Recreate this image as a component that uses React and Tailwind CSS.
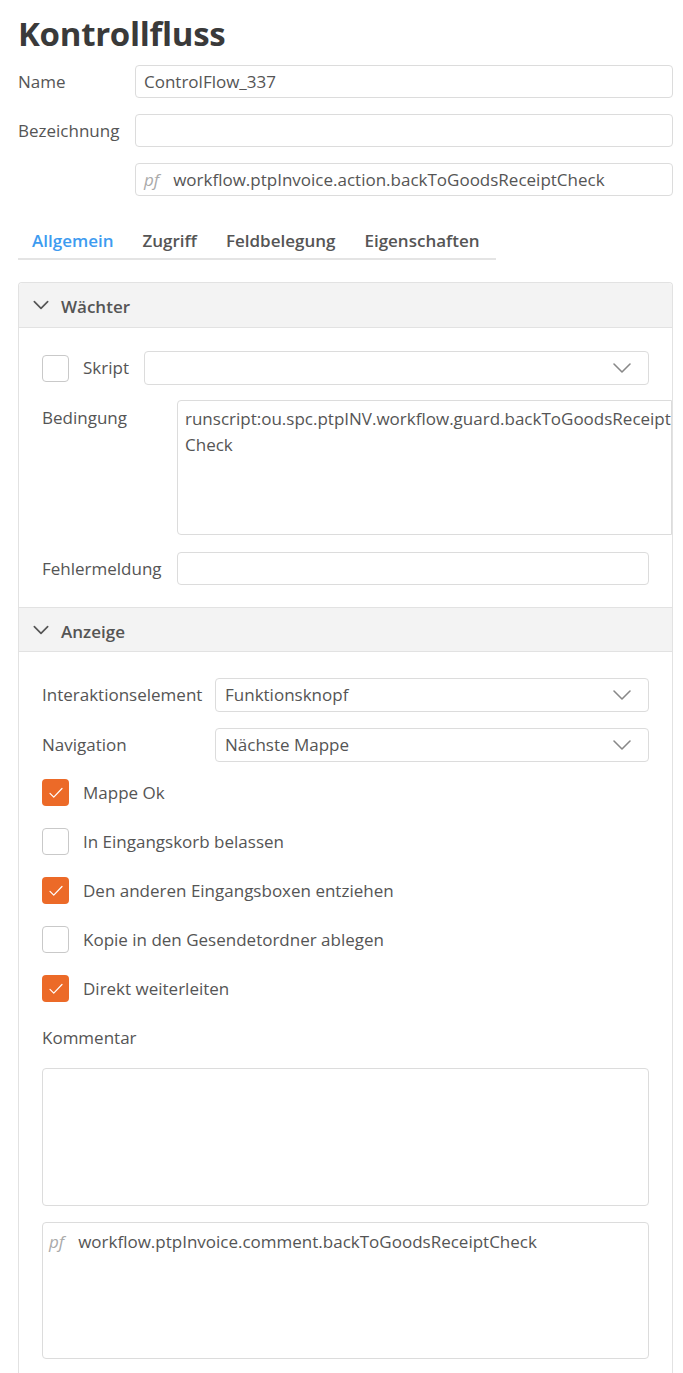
import React from 'react';

const Chevron = ({ className = '', w = '1.6' }) => (
  <svg viewBox="0 0 24 24" className={className} fill="none" stroke="currentColor" strokeWidth={w} strokeLinecap="round" strokeLinejoin="round">
    <path d="M4 8l8 8 8-8" />
  </svg>
);

const Check = () => (
  <svg viewBox="0 0 24 24" className="w-[18px] h-[18px]" fill="none" stroke="white" strokeWidth="1.6" strokeLinecap="round" strokeLinejoin="round">
    <path d="M4 12.5l5 5L20 6" />
  </svg>
);

const Box = ({ checked }) =>
  checked ? (
    <span className="w-[27px] h-[27px] rounded-[4px] bg-[#ec6a28] flex items-center justify-center shrink-0">
      <Check />
    </span>
  ) : (
    <span className="w-[27px] h-[27px] rounded-[4px] border border-[#c9c9c9] bg-white shrink-0" />
  );

const Input = ({ children, className = '' }) => (
  <div className={`h-[33px] border border-[#dcdcdc] rounded-[4px] bg-white flex items-center px-[8px] text-[17px] leading-[22px] text-[#555] ${className}`}>
    {children}
  </div>
);

const Select = ({ value, className = '' }) => (
  <div className={`h-[34px] border border-[#dcdcdc] rounded-[4px] bg-white flex items-center justify-between pl-[9px] pr-[14px] text-[17px] leading-[22px] text-[#555] ${className}`}>
    <span>{value}</span>
    <Chevron className="w-[24px] h-[24px] text-[#888]" />
  </div>
);

const PanelHeader = ({ title, top }) => (
  <div className={`h-[45px] bg-[#f3f3f3] border-b border-[#e2e2e2] flex items-center pl-[12px] gap-[10px] ${top ? 'rounded-t-[4px]' : 'border-t'}`}>
    <Chevron className="w-[20px] h-[20px] text-[#555]" w="2" />
    <span className="text-[17px] leading-[22px] font-semibold text-[#555] pt-[4px]">{title}</span>
  </div>
);

const checks = [
  ['Mappe Ok', true],
  ['In Eingangskorb belassen', false],
  ['Den anderen Eingangsboxen entziehen', true],
  ['Kopie in den Gesendetordner ablegen', false],
  ['Direkt weiterleiten', true],
];

export default function App() {
  return (
    <div className="w-[683px] min-h-[1373px] bg-white font-['Open_Sans',sans-serif] text-[#555] text-[17px] leading-[22px] pl-[18px] pr-[10px]">
      <h1 className="text-[33px] font-bold text-[#3a3a3a] pt-[10px] leading-[48px] tracking-[-0.3px]">Kontrollfluss</h1>

      <div className="mt-[7px] flex flex-col gap-[16px]">
        <div className="flex items-center">
          <span className="w-[117px]">Name</span>
          <Input className="flex-1">ControlFlow_337</Input>
        </div>
        <div className="flex items-center">
          <span className="w-[117px]">Bezeichnung</span>
          <Input className="flex-1" />
        </div>
        <div className="flex items-center">
          <span className="w-[117px]" />
          <Input className="flex-1">
            <span className="italic text-[#aaa] mr-[14px]">pf</span>
            workflow.ptpInvoice.action.backToGoodsReceiptCheck
          </Input>
        </div>
      </div>

      <div className="mt-[34px] w-[478px] border-b-2 border-[#e4e4e4] flex gap-[29px] pl-[14px] pb-[6px] font-semibold">
        <span className="text-[#3d9bf0]">Allgemein</span>
        <span>Zugriff</span>
        <span>Feldbelegung</span>
        <span>Eigenschaften</span>
      </div>

      <div className="mt-[22px] border border-[#e2e2e2] border-b-0 rounded-t-[4px]">
        <PanelHeader title="Wächter" top />
        <div className="pl-[23px] pt-[23px] pb-[22px]">
          <div className="flex items-center pr-[23px]">
            <Box checked={false} />
            <span className="ml-[14px] w-[61px]">Skript</span>
            <Select className="flex-1" value="" />
          </div>
          <div className="flex mt-[15px]">
            <span className="w-[135px] pt-[7px]">Bedingung</span>
            <div className="flex-1 h-[135px] border border-[#dcdcdc] rounded-l-[4px] px-[7px] pt-[5px] leading-[26px] whitespace-nowrap overflow-hidden">
              runscript:ou.spc.ptpINV.workflow.guard.backToGoodsReceipt
              <br />
              Check
            </div>
          </div>
          <div className="flex items-center mt-[17px] pr-[23px]">
            <span className="w-[135px]">Fehlermeldung</span>
            <Input className="flex-1" />
          </div>
        </div>

        <PanelHeader title="Anzeige" />
        <div className="pl-[23px] pr-[23px] pt-[26px]">
          <div className="flex items-center">
            <span className="w-[173px]">Interaktionselement</span>
            <Select className="flex-1" value="Funktionsknopf" />
          </div>
          <div className="flex items-center mt-[16px]">
            <span className="w-[173px]">Navigation</span>
            <Select className="flex-1" value="Nächste Mappe" />
          </div>

          <div className="mt-[17px] flex flex-col gap-[22px]">
            {checks.map(([label, on]) => (
              <div key={label} className="flex items-center">
                <Box checked={on} />
                <span className="ml-[14px]">{label}</span>
              </div>
            ))}
          </div>

          <div className="mt-[25px]">Kommentar</div>
          <div className="mt-[19px] h-[138px] border border-[#dcdcdc] rounded-[4px]" />
          <div className="mt-[16px] h-[137px] border border-[#dcdcdc] rounded-[4px] px-[6px] pt-[8px]">
            <span className="italic text-[#aaa] mr-[14px]">pf</span>
            workflow.ptpInvoice.comment.backToGoodsReceiptCheck
          </div>
          <div className="h-[20px]" />
        </div>
      </div>
    </div>
  );
}
